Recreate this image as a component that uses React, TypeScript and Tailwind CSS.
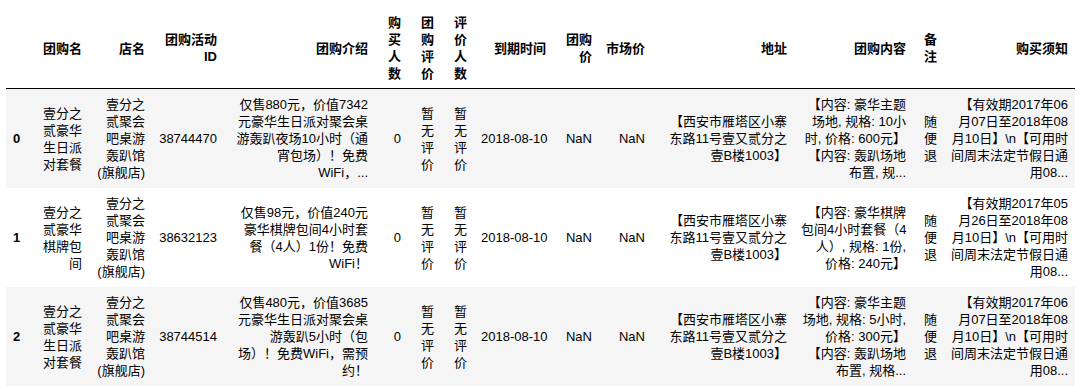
import React from "react";

const headers: string[][] = [
  [""],
  ["团购名"],
  ["店名"],
  ["团购活动", "ID"],
  ["团购介绍"],
  ["购", "买", "人", "数"],
  ["团", "购", "评", "价"],
  ["评", "价", "人", "数"],
  ["到期时间"],
  ["团购", "价"],
  ["市场价"],
  ["地址"],
  ["团购内容"],
  ["备", "注"],
  ["购买须知"],
];

const shop = ["壹分之", "贰聚会", "吧桌游", "轰趴馆", "(旗舰店)"];
const noRating = ["暂", "无", "评", "价"];
const addr = ["【西安市雁塔区小寨", "东路11号壹又贰分之", "壹B楼1003】"];
const refund = ["随", "便", "退"];

const rows: string[][][] = [
  [
    ["0"],
    ["壹分之", "贰豪华", "生日派", "对套餐"],
    shop,
    ["38744470"],
    ["仅售880元，价值7342", "元豪华生日派对聚会桌", "游轰趴夜场10小时（通", "宵包场）！免费", "WiFi，..."],
    ["0"],
    noRating,
    noRating,
    ["2018-08-10"],
    ["NaN"],
    ["NaN"],
    addr,
    ["【内容: 豪华主题", "场地, 规格: 10小", "时, 价格: 600元】", "【内容: 轰趴场地", "布置, 规..."],
    refund,
    ["【有效期2017年06", "月07日至2018年08", "月10日】\\n【可用时", "间周末法定节假日通", "用08..."],
  ],
  [
    ["1"],
    ["壹分之", "贰豪华", "棋牌包", "间"],
    shop,
    ["38632123"],
    ["仅售98元，价值240元", "豪华棋牌包间4小时套", "餐（4人）1份！免费", "WiFi！"],
    ["0"],
    noRating,
    noRating,
    ["2018-08-10"],
    ["NaN"],
    ["NaN"],
    addr,
    ["【内容: 豪华棋牌", "包间4小时套餐（4", "人）, 规格: 1份,", "价格: 240元】"],
    refund,
    ["【有效期2017年05", "月26日至2018年08", "月10日】\\n【可用时", "间周末法定节假日通", "用08..."],
  ],
  [
    ["2"],
    ["壹分之", "贰豪华", "生日派", "对套餐"],
    shop,
    ["38744514"],
    ["仅售480元，价值3685", "元豪华生日派对聚会桌", "游轰趴5小时（包", "场）！免费WiFi，需预", "约！"],
    ["0"],
    noRating,
    noRating,
    ["2018-08-10"],
    ["NaN"],
    ["NaN"],
    addr,
    ["【内容: 豪华主题", "场地, 规格: 5小时,", "价格: 300元】", "【内容: 轰趴场地", "布置, 规格..."],
    refund,
    ["【有效期2017年06", "月07日至2018年08", "月10日】\\n【可用时", "间周末法定节假日通", "用08..."],
  ],
];

function Lines({ lines }: { lines: string[] }) {
  return (
    <>
      {lines.map((l, i) => (
        <div key={i} className="whitespace-nowrap">
          {l}
        </div>
      ))}
    </>
  );
}

export default function App() {
  return (
    <div
      className="w-[1080px] h-[387px] overflow-hidden bg-white text-[13px] leading-[17px] text-black"
      style={{ fontFamily: '"Liberation Sans", "Noto Sans CJK SC", sans-serif' }}
    >
      <table className="ml-[6px] w-[1069px] table-fixed border-separate border-spacing-0">
        <colgroup>
          <col className="w-[20px]" />
          <col className="w-[63px]" />
          <col className="w-[63px]" />
          <col className="w-[72px]" />
          <col className="w-[151px]" />
          <col className="w-[33px]" />
          <col className="w-[33px]" />
          <col className="w-[33px]" />
          <col className="w-[79px]" />
          <col className="w-[46px]" />
          <col className="w-[53px]" />
          <col className="w-[142px]" />
          <col className="w-[119px]" />
          <col className="w-[31px]" />
          <col className="w-[131px]" />
        </colgroup>
        <thead>
          <tr>
            {headers.map((h, i) => (
              <th
                key={i}
                className="text-right align-middle font-bold px-[7px] pt-[14px] pb-[6px] border-b border-black"
              >
                <Lines lines={h} />
              </th>
            ))}
          </tr>
        </thead>
        <tbody>
          {rows.map((r, ri) => (
            <tr key={ri} className={ri % 2 === 0 ? "bg-[#f5f5f5]" : "bg-white"}>
              {r.map((c, ci) =>
                ci === 0 ? (
                  <th key={ci} className="text-right align-middle font-bold px-[7px] py-[7px]">
                    <Lines lines={c} />
                  </th>
                ) : (
                  <td key={ci} className="text-right align-middle font-normal px-[7px] py-[7px]">
                    <Lines lines={c} />
                  </td>
                )
              )}
            </tr>
          ))}
        </tbody>
      </table>
    </div>
  );
}
